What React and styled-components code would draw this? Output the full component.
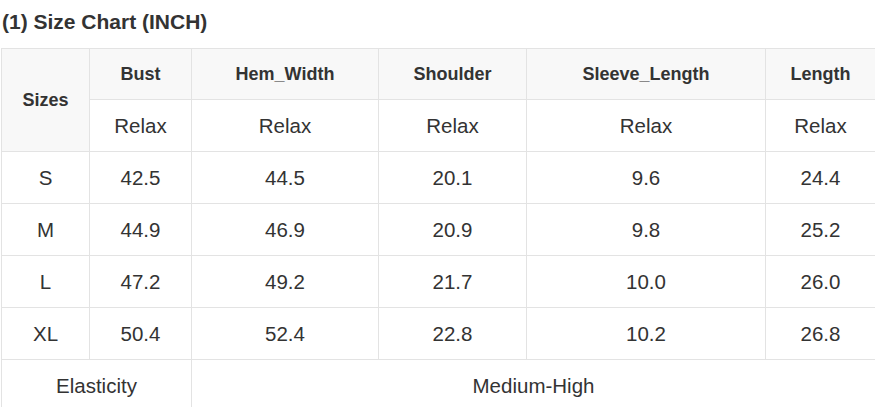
import React from "react";
import styled, { createGlobalStyle } from "styled-components";

const Global = createGlobalStyle`
  html, body { margin: 0; padding: 0; background: #fff; }
  body { font-family: "Liberation Sans", Arial, sans-serif; color: #333; overflow: hidden; }
`;

const Page = styled.div`
  padding-left: 1px;
`;

const Title = styled.h3`
  margin: 0 0 5px 1px;
  font-size: 21px;
  font-weight: bold;
  line-height: 43px;
  color: #333;
`;

const Table = styled.table`
  border-collapse: collapse;
  table-layout: fixed;
  width: 874px;
`;

const Col = styled.col`
  width: ${(p) => p.$w}px;
`;

const HeadCell = styled.th`
  background: #f8f8f8;
  border: 1px solid #e3e3e3;
  font-size: 18px;
  font-weight: bold;
  text-align: center;
  padding: 0;
  height: ${(p) => p.$h || 50}px;
`;

const Cell = styled.td`
  background: ${(p) => (p.$shade ? "#f8f8f8" : "#fff")};
  border: 1px solid #e3e3e3;
  font-size: 20.5px;
  text-align: center;
  padding: 0;
  height: 51px;
`;

const cols = ["Bust", "Hem_Width", "Shoulder", "Sleeve_Length", "Length"];
const rows = [
  ["S", "42.5", "44.5", "20.1", "9.6", "24.4"],
  ["M", "44.9", "46.9", "20.9", "9.8", "25.2"],
  ["L", "47.2", "49.2", "21.7", "10.0", "26.0"],
  ["XL", "50.4", "52.4", "22.8", "10.2", "26.8"],
];

export default function App() {
  return (
    <Page>
      <Global />
      <Title>(1) Size Chart (INCH)</Title>
      <Table>
        <colgroup>
          <Col $w={88} />
          <Col $w={102} />
          <Col $w={187} />
          <Col $w={148} />
          <Col $w={239} />
          <Col $w={110} />
        </colgroup>
        <thead>
          <tr>
            <HeadCell rowSpan={2}>Sizes</HeadCell>
            {cols.map((c) => (
              <HeadCell key={c} $h={50}>{c}</HeadCell>
            ))}
          </tr>
          <tr>
            {cols.map((c) => (
              <Cell key={c}>Relax</Cell>
            ))}
          </tr>
        </thead>
        <tbody>
          {rows.map((r) => (
            <tr key={r[0]}>
              {r.map((v, i) => (
                <Cell key={i}>{v}</Cell>
              ))}
            </tr>
          ))}
          <tr>
            <Cell colSpan={2}>Elasticity</Cell>
            <Cell colSpan={4}>Medium-High</Cell>
          </tr>
        </tbody>
      </Table>
    </Page>
  );
}
